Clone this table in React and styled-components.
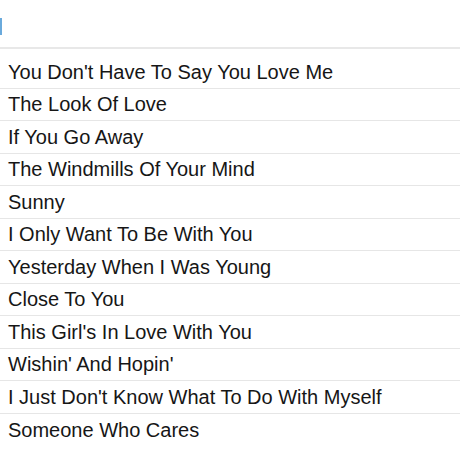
import React from "react";
import styled, { createGlobalStyle } from "styled-components";

const songs = [
  "You Don't Have To Say You Love Me",
  "The Look Of Love",
  "If You Go Away",
  "The Windmills Of Your Mind",
  "Sunny",
  "I Only Want To Be With You",
  "Yesterday When I Was Young",
  "Close To You",
  "This Girl's In Love With You",
  "Wishin' And Hopin'",
  "I Just Don't Know What To Do With Myself",
  "Someone Who Cares",
];

const GlobalStyle = createGlobalStyle`
  body {
    margin: 0;
    background: #ffffff;
    font-family: "Liberation Sans", Arial, Helvetica, sans-serif;
  }
`;

const Page = styled.div`
  width: 460px;
  height: 460px;
  overflow: hidden;
  background: #ffffff;
`;

const Header = styled.div`
  height: 47px;
  padding-top: 18px;
  box-sizing: border-box;
`;

const Marker = styled.div`
  width: 2px;
  height: 17px;
  background: #6aaadc;
`;

const List = styled.ul`
  list-style: none;
  margin: 0;
  padding: 7px 0 0;
  border-top: 2px solid #e8e8e8;
`;

const Row = styled.li`
  height: 32.5px;
  box-sizing: border-box;
  padding-left: 8px;
  padding-top: 1px;
  display: flex;
  align-items: center;
  font-size: 20px;
  color: #161616;
  border-bottom: ${({ last }) => (last ? "none" : "1.5px solid #e6e6e6")};
`;

export default function App() {
  return (
    <Page>
      <GlobalStyle />
      <Header>
        <Marker />
      </Header>
      <List>
        {songs.map((s, i) => (
          <Row key={s} last={i === songs.length - 1}>
            {s}
          </Row>
        ))}
      </List>
    </Page>
  );
}
